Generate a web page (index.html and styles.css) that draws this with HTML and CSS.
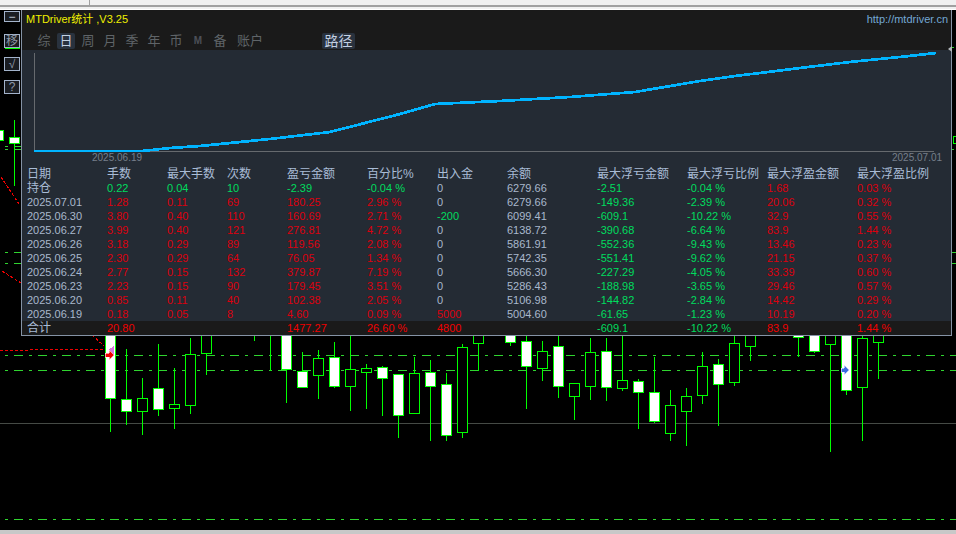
FILE: index.html
```html
<!DOCTYPE html>
<html lang="zh">
<head>
<meta charset="utf-8">
<title>MTDriver统计</title>
<link rel="stylesheet" href="styles.css">
</head>
<body>
<div class="app">
  <div class="topbar"><i class="tick"></i></div>
  <div class="stage">
    <svg class="plot" viewBox="0 10 956 520" width="956" height="520">
      <g class="hline">
        <path d="M0 423.5H956"/>
      </g>
      <g class="dash">
        <path d="M5 252.5H956"/>
        <path d="M5 263.5H956"/>
        <path d="M5 355.5H956"/>
        <path d="M5 370.5H956"/>
        <path d="M5 519.5H956"/>
        <path d="M5 146.5H21"/>
        <path d="M5 149.5H21"/>
        <path d="M951 47.5H956"/>
        <path d="M951 149.5H956"/>
      </g>
      <path class="reddash" d="M0 350.5H30M30 349.5H105M1 177L19 204M2 271L21 283M92 335L104 346"/>
      <path class="wick" d="M14.5 120V186M5 48.5H20M110.5 398V432M126.5 349V425M142.5 378V435M158.5 344V416M174.5 368V429M190.5 338V414M206.5 353V375M254.5 336V341M270.5 336V371M286.5 369V403M302.5 352V387M318.5 350V399M334.5 342V388M350.5 336V411M366.5 364V409M382.5 366V416M398.5 415V438M414.5 357V373M430.5 360V441M446.5 373V441M462.5 344V438M478.5 336V371M510.5 342V346M526.5 336V409M542.5 341V381M558.5 336V398M574.5 396V420M590.5 338V400M606.5 338V401M622.5 336V391M638.5 379V429M654.5 357V423M670.5 390V441M686.5 388V446M702.5 352V404M718.5 359V426M734.5 336V386M750.5 336V361M798.5 337V357M814.5 351V353M830.5 344V452M846.5 390V395M862.5 336V441M878.5 342V379"/>
      <g class="hollow">
        <rect x="137.5" y="398.5" width="10" height="13"/>
        <rect x="169.5" y="404.5" width="10" height="4"/>
        <rect x="185.5" y="354.5" width="10" height="51"/>
        <rect x="201.5" y="330" width="10" height="23.5"/>
        <rect x="313.5" y="358.5" width="10" height="17"/>
        <rect x="345.5" y="369.5" width="10" height="17"/>
        <rect x="361.5" y="368.5" width="10" height="4"/>
        <rect x="409.5" y="373.5" width="10" height="40"/>
        <rect x="457.5" y="347.5" width="10" height="85"/>
        <rect x="473.5" y="330" width="10" height="13.5"/>
        <rect x="537.5" y="351.5" width="10" height="17"/>
        <rect x="569.5" y="383.5" width="10" height="13"/>
        <rect x="585.5" y="352.5" width="10" height="34"/>
        <rect x="617.5" y="380.5" width="10" height="8"/>
        <rect x="665.5" y="405.5" width="10" height="28"/>
        <rect x="681.5" y="396.5" width="10" height="15"/>
        <rect x="697.5" y="366.5" width="10" height="29"/>
        <rect x="729.5" y="343.5" width="10" height="39"/>
        <rect x="745.5" y="330" width="10" height="16.5"/>
        <rect x="825.5" y="330" width="10" height="14.5"/>
        <rect x="857.5" y="338.5" width="10" height="49"/>
        <rect x="873.5" y="330" width="10" height="12.5"/>
        <rect x="953.5" y="136.5" width="10" height="7"/>
      </g>
      <g class="solid">
        <rect x="-5.5" y="130.5" width="9" height="10"/>
        <rect x="9.5" y="137.5" width="10" height="6"/>
        <rect x="105.5" y="330" width="10" height="68.5"/>
        <rect x="121.5" y="399.5" width="10" height="12"/>
        <rect x="153.5" y="388.5" width="10" height="21"/>
        <rect x="281.5" y="330" width="10" height="39.5"/>
        <rect x="297.5" y="371.5" width="10" height="16"/>
        <rect x="329.5" y="357.5" width="10" height="29"/>
        <rect x="377.5" y="367.5" width="10" height="11"/>
        <rect x="393.5" y="374.5" width="10" height="41"/>
        <rect x="425.5" y="372.5" width="10" height="14"/>
        <rect x="441.5" y="384.5" width="10" height="51"/>
        <rect x="505.5" y="330" width="10" height="12.5"/>
        <rect x="521.5" y="341.5" width="10" height="25"/>
        <rect x="553.5" y="346.5" width="10" height="40"/>
        <rect x="601.5" y="351.5" width="10" height="36"/>
        <rect x="633.5" y="381.5" width="10" height="11"/>
        <rect x="649.5" y="392.5" width="10" height="29"/>
        <rect x="713.5" y="364.5" width="10" height="20"/>
        <rect x="793.5" y="330" width="10" height="7.5"/>
        <rect x="809.5" y="330" width="10" height="21.5"/>
        <rect x="841.5" y="330" width="10" height="60.5"/>
      </g>
      <path class="arrow-pink" d="M114 346V355L108 350Z"/>
      <path class="arrow-red" d="M105 353H109V350L114 355L109 360V357H105Z"/>
      <path class="arrow-blue" d="M841 368H844V365L849 370L844 375V372H841Z"/>
    </svg>

    <div class="tools">
      <div class="tool tool-s">−</div>
      <div class="tool">移</div>
      <div class="tool">√</div>
      <div class="tool">?</div>
    </div>

    <section class="panel">
      <header class="head">
        <div class="titlebar">
          <span class="title">MTDriver统计 ,V3.25</span>
          <span class="url">http://mtdriver.cn</span>
        </div>
        <nav class="tabs">
          <span class="tab">综</span>
          <span class="tab on">日</span>
          <span class="tab">周</span>
          <span class="tab">月</span>
          <span class="tab">季</span>
          <span class="tab">年</span>
          <span class="tab">币</span>
          <span class="tab tab-m">M</span>
          <span class="tab">备</span>
          <span class="tab tab-w">账户</span>
          <span class="tab on tab-path">路径</span>
        </nav>
      </header>
      <svg class="curve" viewBox="22 50 929 117" width="929" height="117">
        <path class="axis" d="M34.5 53V151.5H934"/>
        <path class="line" d="M34 151H142L170 148L200 146L270 139L330 132L400 114L435 104L500 101L570 97L635 92L700 81L735 76L760 73L800 68L850 62L900 57L936 53"/>
        <text class="date" x="92" y="161">2025.06.19</text>
        <text class="date" x="892" y="161">2025.07.01</text>
      </svg>
      <div class="grid">
        <div class="row hd"><span>日期</span><span>手数</span><span>最大手数</span><span>次数</span><span>盈亏金额</span><span>百分比%</span><span>出入金</span><span>余额</span><span>最大浮亏金额</span><span>最大浮亏比例</span><span>最大浮盈金额</span><span>最大浮盈比例</span></div>
        <div class="row"><span class="lb">持仓</span><span class="g">0.22</span><span class="g">0.04</span><span class="g">10</span><span class="g">-2.39</span><span class="g">-0.04 %</span><span>0</span><span>6279.66</span><span class="g">-2.51</span><span class="g">-0.04 %</span><span class="r">1.68</span><span class="r">0.03 %</span></div>
        <div class="row"><span>2025.07.01</span><span class="r">1.28</span><span class="r">0.11</span><span class="r">69</span><span class="r">180.25</span><span class="r">2.96 %</span><span>0</span><span>6279.66</span><span class="g">-149.36</span><span class="g">-2.39 %</span><span class="r">20.06</span><span class="r">0.32 %</span></div>
        <div class="row"><span>2025.06.30</span><span class="r">3.80</span><span class="r">0.40</span><span class="r">110</span><span class="r">160.69</span><span class="r">2.71 %</span><span class="g">-200</span><span>6099.41</span><span class="g">-609.1</span><span class="g">-10.22 %</span><span class="r">32.9</span><span class="r">0.55 %</span></div>
        <div class="row"><span>2025.06.27</span><span class="r">3.99</span><span class="r">0.40</span><span class="r">121</span><span class="r">276.81</span><span class="r">4.72 %</span><span>0</span><span>6138.72</span><span class="g">-390.68</span><span class="g">-6.64 %</span><span class="r">83.9</span><span class="r">1.44 %</span></div>
        <div class="row"><span>2025.06.26</span><span class="r">3.18</span><span class="r">0.29</span><span class="r">89</span><span class="r">119.56</span><span class="r">2.08 %</span><span>0</span><span>5861.91</span><span class="g">-552.36</span><span class="g">-9.43 %</span><span class="r">13.46</span><span class="r">0.23 %</span></div>
        <div class="row"><span>2025.06.25</span><span class="r">2.30</span><span class="r">0.29</span><span class="r">64</span><span class="r">76.05</span><span class="r">1.34 %</span><span>0</span><span>5742.35</span><span class="g">-551.41</span><span class="g">-9.62 %</span><span class="r">21.15</span><span class="r">0.37 %</span></div>
        <div class="row"><span>2025.06.24</span><span class="r">2.77</span><span class="r">0.15</span><span class="r">132</span><span class="r">379.87</span><span class="r">7.19 %</span><span>0</span><span>5666.30</span><span class="g">-227.29</span><span class="g">-4.05 %</span><span class="r">33.39</span><span class="r">0.60 %</span></div>
        <div class="row"><span>2025.06.23</span><span class="r">2.23</span><span class="r">0.15</span><span class="r">90</span><span class="r">179.45</span><span class="r">3.51 %</span><span>0</span><span>5286.43</span><span class="g">-188.98</span><span class="g">-3.65 %</span><span class="r">29.46</span><span class="r">0.57 %</span></div>
        <div class="row"><span>2025.06.20</span><span class="r">0.85</span><span class="r">0.11</span><span class="r">40</span><span class="r">102.38</span><span class="r">2.05 %</span><span>0</span><span>5106.98</span><span class="g">-144.82</span><span class="g">-2.84 %</span><span class="r">14.42</span><span class="r">0.29 %</span></div>
        <div class="row"><span>2025.06.19</span><span class="r">0.18</span><span class="r">0.05</span><span class="r">8</span><span class="r">4.60</span><span class="r">0.09 %</span><span class="r">5000</span><span>5004.60</span><span class="g">-61.65</span><span class="g">-1.23 %</span><span class="r">10.19</span><span class="r">0.20 %</span></div>
        <div class="row total"><span class="lb">合计</span><span class="rr">20.80</span><span></span><span></span><span class="rr">1477.27</span><span class="rr">26.60 %</span><span class="rr">4800</span><span></span><span class="g">-609.1</span><span class="g">-10.22 %</span><span class="rr">83.9</span><span class="rr">1.44 %</span></div>
      </div>
      <i class="grip"></i>
    </section>
  </div>
  <div class="bottombar"></div>
</div>
</body>
</html>
```

FILE: styles.css
```css
* { box-sizing: border-box; }
html, body { margin: 0; padding: 0; background: #000; overflow: hidden; }
body { font-family: "Liberation Sans", "Noto Sans CJK SC", sans-serif; }

.app { width: 956px; height: 534px; display: flex; flex-direction: column; }

.topbar {
  position: relative;
  height: 10px;
  flex: none;
  background: #f0f0f0;
  border-top: 5px solid #f0f0f0;
  border-bottom: 1px solid #fff;
  box-shadow: inset 0 2px 0 #a0a0a0;
}
.tick { position: absolute; left: 89px; top: -5px; width: 1px; height: 5px; background: #a0a0a0; }

.stage { position: relative; flex: 1; overflow: hidden; background: #000; }
.bottombar { height: 4px; flex: none; background: #c8c8c8; }

.plot { display: block; shape-rendering: crispEdges; }
.hline path { stroke: #454a45; stroke-width: 1; fill: none; }
.dash path { stroke: #2fd42f; stroke-width: 1; fill: none; stroke-dasharray: 9 6 3 6; stroke-dashoffset: 15; }
.reddash { stroke: #f00000; stroke-width: 1; fill: none; stroke-dasharray: 3 2; }
.wick { stroke: #00ff00; stroke-width: 1; fill: none; }
.hollow rect { fill: #000; stroke: #00ff00; stroke-width: 1; }
.solid rect { fill: #fff; stroke: #00ff00; stroke-width: 1; }
.arrow-pink { fill: #d878e0; }
.arrow-red { fill: #f00000; stroke: #fff; stroke-width: .6; }
.arrow-blue { fill: #3a6ae0; stroke: #fff; stroke-width: .6; }

.tools {
  position: absolute;
  left: 4px;
  top: 1px;
  display: flex;
  flex-direction: column;
  gap: 9px;
}
.tool {
  width: 16px;
  height: 14px;
  display: flex;
  align-items: center;
  justify-content: center;
  border: 1px solid #a3b3cb;
  background: #1a1d22;
  color: #8d97a6;
  font-size: 12px;
  line-height: 1;
}
.tool-s { height: 11px; margin-bottom: 3px; color: #c5cfdd; }

.panel {
  position: absolute;
  left: 21px;
  top: 0;
  width: 931px;
  height: 326px;
  border: 1px solid #8593a5;
  border-top: 0;
  background: #242b34;
  display: flex;
  flex-direction: column;
}

.head { height: 40px; flex: none; background: #1a1a1a; }
.titlebar {
  height: 22px;
  padding: 3px 3px 0 4px;
  display: flex;
  justify-content: space-between;
  font-size: 11px;
  line-height: 13px;
}
.title { color: #f0f000; }
.url { color: #74a8d4; font-size: 11px; }

.tabs { height: 18px; padding: 1px 0 0 11px; display: flex; }
.tab {
  width: 22px;
  height: 16px;
  border-radius: 2px;
  color: #5f6468;
  font-size: 13px;
  line-height: 16px;
  text-align: center;
}
.tab.on { background: #29323e; color: #c3d0e2; width: 18px; margin: 0 2px; }
.tab-m { font-size: 10px; font-weight: bold; color: #4c5058; }
.tab-w { width: 30px; margin-left: 4px; margin-right: 57px; font-size: 13px; }
.tab.on.tab-path { width: 33px; margin: 0; font-size: 14px; }

.curve { display: block; flex: none; }
.axis { fill: none; stroke: #666a6e; stroke-width: 1; shape-rendering: crispEdges; }
.line { fill: none; stroke: #00b4ff; stroke-width: 2.7; shape-rendering: crispEdges; }
.date { fill: #767f8b; font-size: 10px; }

.grid { flex: 1; display: flex; flex-direction: column; }
.row {
  height: 14px;
  flex: none;
  padding-left: 5px;
  display: grid;
  grid-template-columns: 80px 60px 60px 60px 80px 70px 70px 90px 90px 80px 90px 1fr;
  color: #a9b8cc;
  font-size: 11px;
  line-height: 14px;
  white-space: nowrap;
}
.hd, .lb { font-size: 12px; color: #a9bcd6; }
.total { background: #1a1a1a; }
.r { color: #dc000e; }
.rr { color: #f00000; }
.g { color: #00dc5e; }

.grip {
  position: absolute;
  right: -1px;
  top: 36px;
  width: 0;
  height: 0;
  border: 3px solid transparent;
  border-right: 4px solid #b4b8bc;
  border-left: 0;
}
```
